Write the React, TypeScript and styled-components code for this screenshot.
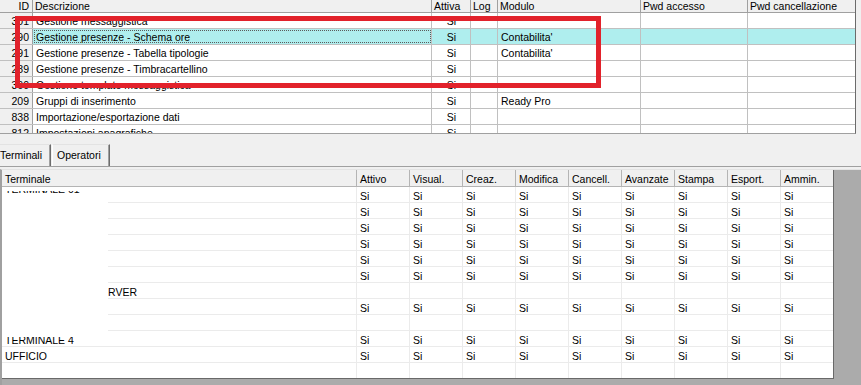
import styled, { createGlobalStyle } from "styled-components";

const GlobalStyle = createGlobalStyle`
  html, body {
    margin: 0;
    padding: 0;
  }
  body {
    background: #f0f0f0;
    font-family: "Liberation Sans", Arial, sans-serif;
    font-size: 10.5px;
    color: #000;
  }
`;

type Col = { label: string; width: number; align?: "left" | "center" | "right" };

const topCols: Col[] = [
  { label: "ID", width: 33, align: "right" },
  { label: "Descrizione", width: 399 },
  { label: "Attiva", width: 39 },
  { label: "Log", width: 27 },
  { label: "Modulo", width: 143 },
  { label: "Pwd accesso", width: 107 },
  { label: "Pwd cancellazione", width: 107 },
];

const moduli = [
  { id: "301", desc: "Gestione messaggistica", modulo: "" },
  { id: "290", desc: "Gestione presenze - Schema ore", modulo: "Contabilita'", selected: true },
  { id: "291", desc: "Gestione presenze - Tabella tipologie", modulo: "Contabilita'" },
  { id: "289", desc: "Gestione presenze - Timbracartellino", modulo: "" },
  { id: "360", desc: "Gestione template messaggistica", modulo: "" },
  { id: "209", desc: "Gruppi di inserimento", modulo: "Ready Pro" },
  { id: "838", desc: "Importazione/esportazione dati", modulo: "" },
  { id: "812", desc: "Impostazioni anagrafiche", modulo: "" },
];

const permCols = [
  "Attivo",
  "Visual.",
  "Creaz.",
  "Modifica",
  "Cancell.",
  "Avanzate",
  "Stampa",
  "Esport.",
  "Ammin.",
];

type Terminale = { name: string; si: boolean; clipped?: boolean; indent?: number };

// i nomi oscurati nello screenshot restano vuoti
const terminali: Terminale[] = [
  { name: "TERMINALE 01", si: true, clipped: true },
  { name: "", si: true },
  { name: "", si: true },
  { name: "", si: true },
  { name: "", si: true },
  { name: "", si: true },
  { name: "RVER", si: false, indent: 106 },
  { name: "", si: true },
  { name: "", si: false },
  { name: "TERMINALE 4", si: true },
  { name: "UFFICIO", si: true },
  { name: "", si: false },
];

export default function App() {
  return (
    <>
      <GlobalStyle />
      <Window>
        <TopGrid>
          <TopHeader>
            {topCols.map((c, i) => (
              <TopHeadCell key={c.label} $w={c.width} $align={c.align} $last={i === topCols.length - 1}>
                {c.label}
              </TopHeadCell>
            ))}
          </TopHeader>
          {moduli.map((m) => (
            <TopRow key={m.id}>
              <IdCell $w={topCols[0].width}>{m.id}</IdCell>
              <TopCell $w={topCols[1].width} $selected={m.selected} $focus={m.selected}>
                {m.desc}
              </TopCell>
              <TopCell $w={topCols[2].width} $selected={m.selected} $align="center">
                Si
              </TopCell>
              <TopCell $w={topCols[3].width} $selected={m.selected} />
              <TopCell $w={topCols[4].width} $selected={m.selected}>
                {m.modulo}
              </TopCell>
              <TopCell $w={topCols[5].width} $selected={m.selected} />
              <TopCell $w={topCols[6].width} $selected={m.selected} $last />
            </TopRow>
          ))}
          <Highlight />
        </TopGrid>

        <TabStrip>
          <Tab $active>Terminali</Tab>
          <Tab>Operatori</Tab>
        </TabStrip>

        <Panel>
          <GridArea>
            <PermTable>
              <PermHeader>
                <PermHeadCell $w={355}>Terminale</PermHeadCell>
                {permCols.map((c, i) => (
                  <PermHeadCell key={c} $w={i === permCols.length - 1 ? 52 : 53} $last={i === permCols.length - 1}>
                    {c}
                  </PermHeadCell>
                ))}
              </PermHeader>
              {terminali.map((t, r) => (
                <PermRow key={r} $last={r === terminali.length - 1}>
                  <PermCell $w={355} $indent={t.indent}>
                    {t.clipped ? (
                      <ClipBand>
                        <ClipText>{t.name}</ClipText>
                      </ClipBand>
                    ) : (
                      t.name
                    )}
                  </PermCell>
                  {permCols.map((c, i) => (
                    <PermCell key={c} $w={i === permCols.length - 1 ? 52 : 53} $last={i === permCols.length - 1}>
                      {t.si ? "Si" : ""}
                    </PermCell>
                  ))}
                </PermRow>
              ))}
              <Redaction />
            </PermTable>
          </GridArea>
        </Panel>
      </Window>
    </>
  );
}

const Window = styled.div`
  width: 861px;
  height: 385px;
  display: flex;
  flex-direction: column;
  overflow: hidden;
  background: #f0f0f0;
`;

/* ---- griglia moduli ---- */

const TopGrid = styled.div`
  position: relative;
  width: 856px;
  height: 134px;
  box-sizing: border-box;
  background: #fff;
  border-right: 1px solid #6b6b6b;
  border-bottom: 1px solid #a0a0a0;
  overflow: hidden;
  flex-shrink: 0;
`;

const TopHeader = styled.div`
  display: flex;
  height: 13px;
  box-sizing: border-box;
  background: #f0f0f0;
  border-bottom: 1px solid #a0a0a0;
`;

const TopHeadCell = styled.div<{ $w: number; $align?: string; $last?: boolean }>`
  width: ${(p) => p.$w}px;
  flex-shrink: 0;
  box-sizing: border-box;
  height: 12px;
  line-height: 12px;
  padding: 0 ${(p) => (p.$align === "right" ? 3 : 2)}px 0 2px;
  text-align: ${(p) => p.$align || "left"};
  border-right: ${(p) => (p.$last ? "none" : "1px solid #a0a0a0")};
  white-space: nowrap;
  overflow: hidden;
`;

const TopRow = styled.div`
  display: flex;
  height: 16px;
  box-sizing: border-box;
  border-bottom: 1px solid #c0c0c0;
`;

const IdCell = styled.div<{ $w: number }>`
  width: ${(p) => p.$w}px;
  flex-shrink: 0;
  box-sizing: border-box;
  height: 15px;
  line-height: 15px;
  padding: 1px 3px 0 0;
  text-align: right;
  background: #f0f0f0;
  border-right: 1px solid #a0a0a0;
  overflow: hidden;
`;

const TopCell = styled.div<{
  $w: number;
  $selected?: boolean;
  $focus?: boolean;
  $align?: string;
  $last?: boolean;
}>`
  width: ${(p) => p.$w}px;
  flex-shrink: 0;
  box-sizing: border-box;
  height: 15px;
  line-height: 15px;
  padding: 1px 2px 0 3px;
  text-align: ${(p) => p.$align || "left"};
  background: ${(p) => (p.$selected ? "#afeeee" : "#fff")};
  border-right: ${(p) => (p.$last ? "none" : "1px solid #c0c0c0")};
  outline: ${(p) => (p.$focus ? "1px dotted #5a5a5a" : "none")};
  outline-offset: -2px;
  white-space: nowrap;
  overflow: hidden;
`;

const Highlight = styled.div`
  position: absolute;
  left: 15px;
  top: 16px;
  width: 586px;
  height: 72px;
  box-sizing: border-box;
  border: 5px solid #e2222b;
  pointer-events: none;
`;

/* ---- linguette ---- */

const TabStrip = styled.div`
  height: 32px;
  flex-shrink: 0;
  display: flex;
  align-items: flex-end;
  gap: 1px;
`;

const Tab = styled.div<{ $active?: boolean }>`
  height: 22px;
  box-sizing: border-box;
  padding: 2px 4px 0 ${(p) => (p.$active ? 0 : 4)}px;
  line-height: 16px;
  border-top: 1px solid #e3e3e3;
  border-left: ${(p) => (p.$active ? "none" : "1px solid #ffffff")};
  border-right: 1px solid #6d6d6d;
  box-shadow: inset -1px 0 0 #a0a0a0;
  font-size: 10.5px;
  white-space: nowrap;
  width: ${(p) => (p.$active ? 51 : 58)}px;
`;

/* ---- griglia permessi ---- */

const Panel = styled.div`
  flex: 1;
  display: flex;
  flex-direction: column;
  border-top: 1px solid #a0a0a0;
  padding-top: 3px;
`;

const GridArea = styled.div`
  flex: 1;
  background: #ababab;
  border-left: 2px solid #a0a0a0;
  border-top: 1px solid #e3e3e3;
  margin-top: -1px;
`;

const PermTable = styled.div`
  position: relative;
  width: 832px;
  box-sizing: border-box;
  background: #fff;
  border-right: 1px solid #696969;
  border-bottom: 1px solid #696969;
`;

const PermHeader = styled.div`
  display: flex;
  height: 17px;
  box-sizing: border-box;
  background: #f0f0f0;
  border-bottom: 1px solid #b4b4b4;
`;

const PermHeadCell = styled.div<{ $w: number; $last?: boolean }>`
  width: ${(p) => p.$w}px;
  flex-shrink: 0;
  box-sizing: border-box;
  height: 16px;
  line-height: 16px;
  padding: 1px 2px 0 3px;
  border-right: ${(p) => (p.$last ? "none" : "1px solid #b4b4b4")};
  white-space: nowrap;
  overflow: hidden;
`;

const PermRow = styled.div<{ $last?: boolean }>`
  display: flex;
  height: ${(p) => (p.$last ? 15 : 16)}px;
  box-sizing: border-box;
  border-bottom: ${(p) => (p.$last ? "none" : "1px solid #ebebeb")};
`;

const PermCell = styled.div<{ $w: number; $last?: boolean; $indent?: number }>`
  width: ${(p) => p.$w}px;
  flex-shrink: 0;
  box-sizing: border-box;
  height: 15px;
  line-height: 15px;
  padding: 2px 2px 0 ${(p) => p.$indent ?? 3}px;
  border-right: ${(p) => (p.$last ? "none" : "1px solid #ebebeb")};
  white-space: nowrap;
  overflow: hidden;
`;

// solo il fondo delle lettere resta visibile sopra la parte oscurata
const ClipBand = styled.span`
  display: block;
  height: 3px;
  margin-top: 2px;
  overflow: hidden;
`;

const ClipText = styled.span`
  display: block;
  line-height: 11px;
  margin-top: -7px;
`;

const Redaction = styled.div`
  position: absolute;
  left: 0;
  top: 24px;
  width: 106px;
  height: 143px;
  background: #fff;
`;
